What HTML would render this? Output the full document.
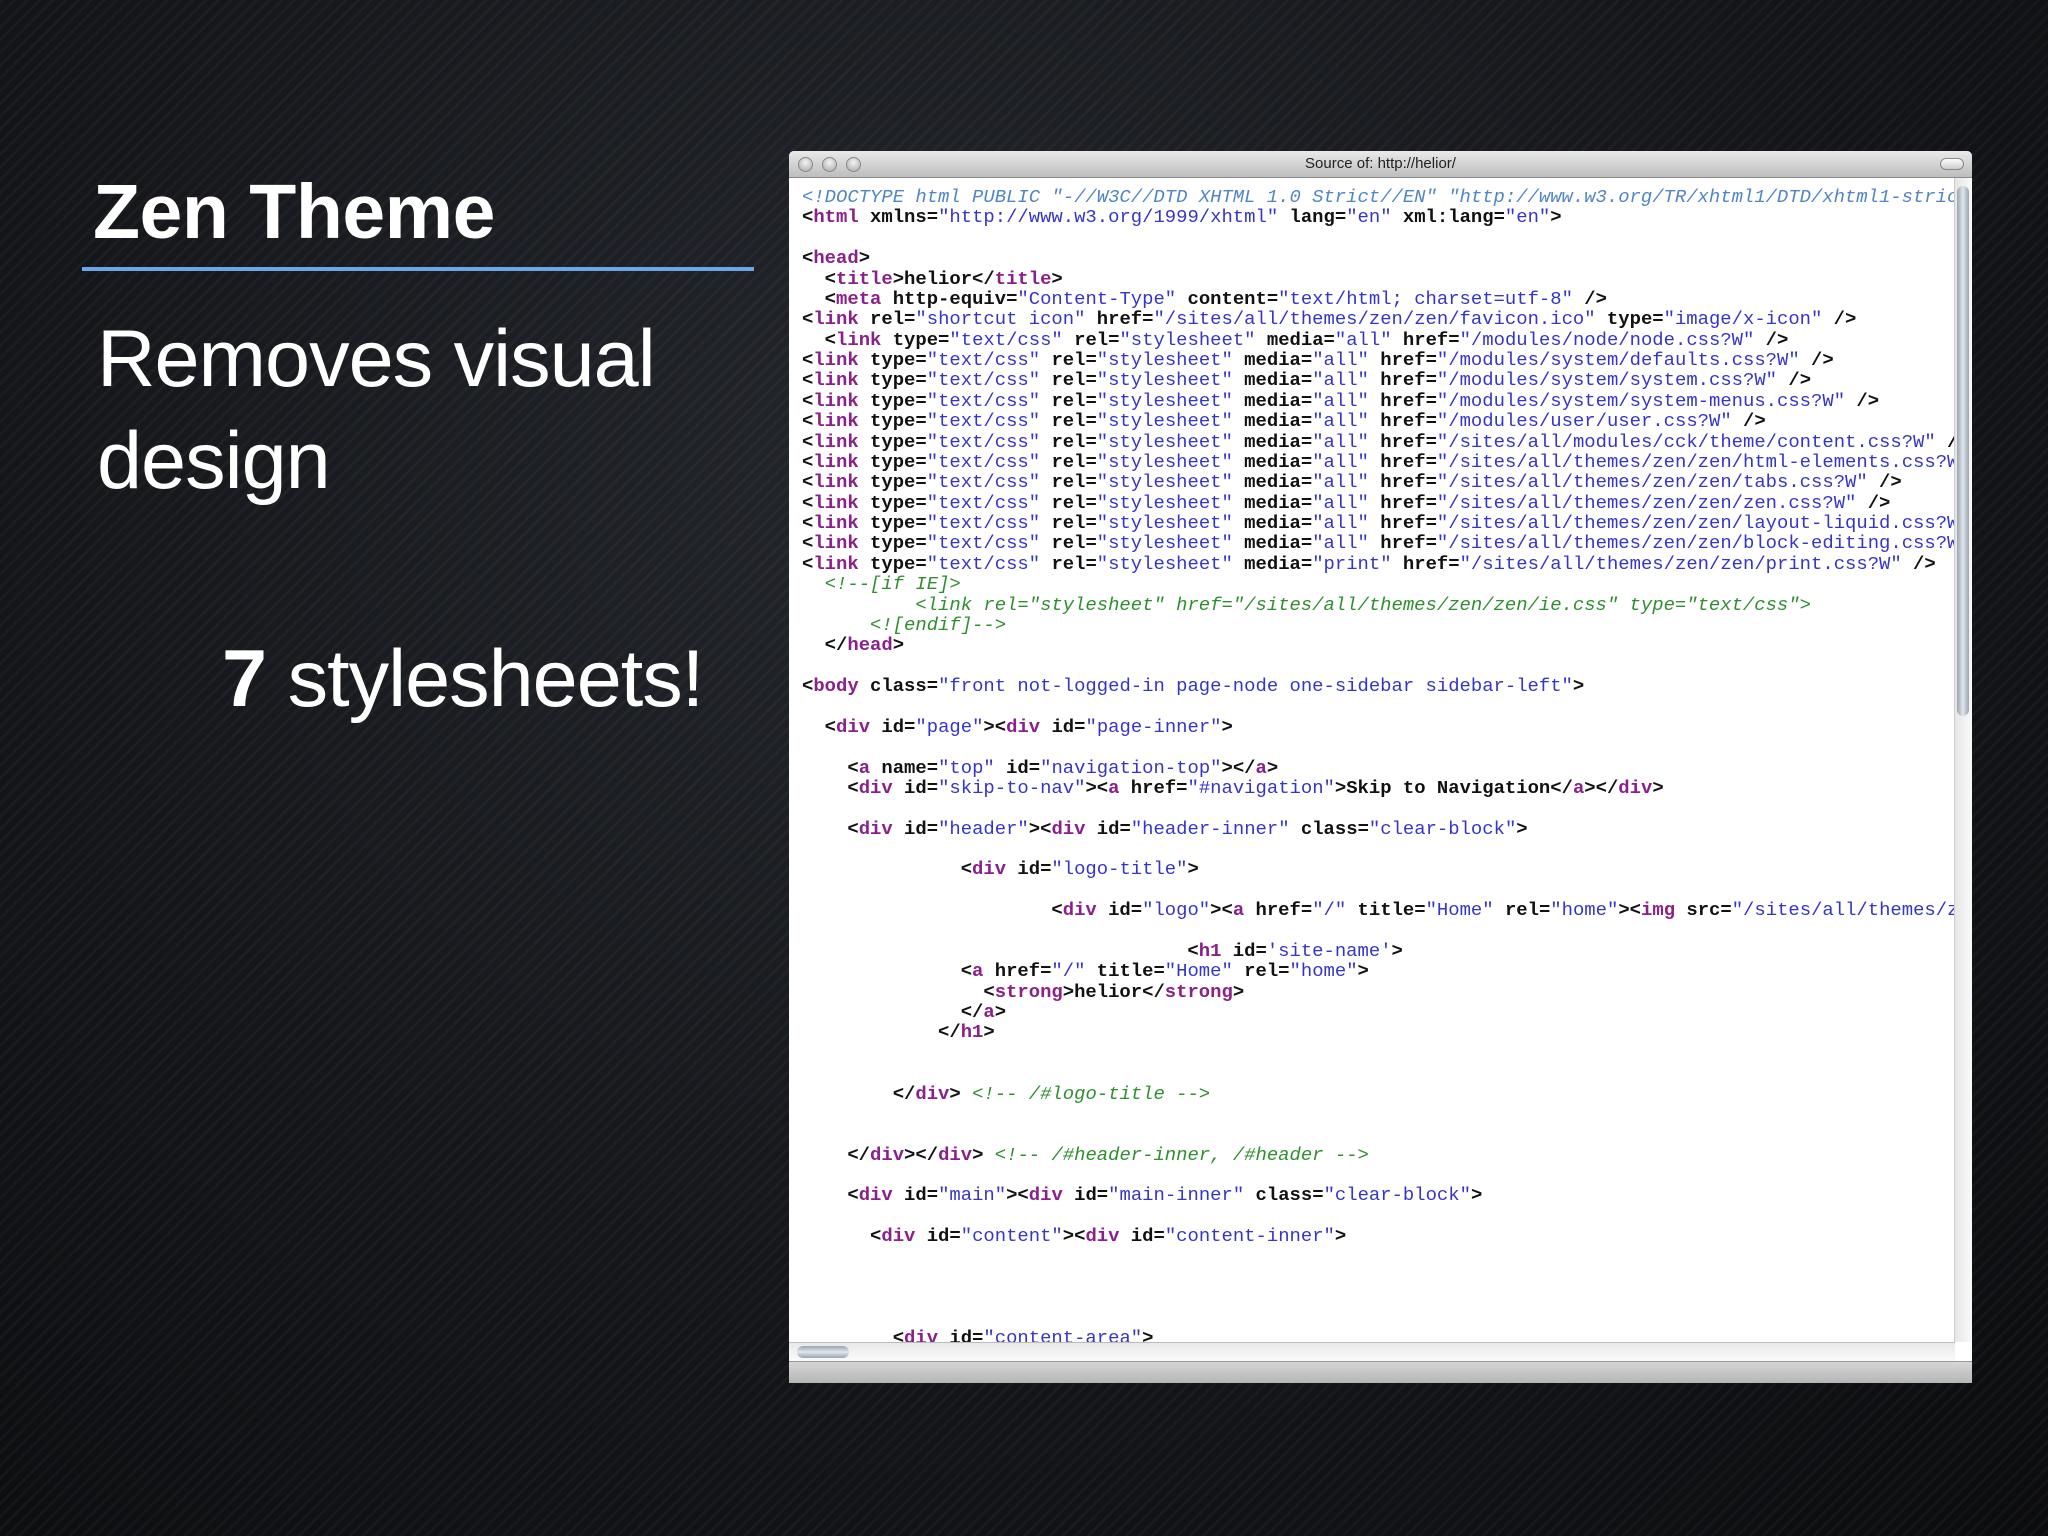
<!DOCTYPE html>
<html><head><meta charset="utf-8">
<style>
html,body{margin:0;padding:0}
body{width:2048px;height:1536px;overflow:hidden;position:relative;
background:
repeating-linear-gradient(135deg,rgba(255,255,255,0.03) 0 3px,rgba(0,0,0,0) 3px 9px),
radial-gradient(ellipse at 45% 30%,#23262b 0%,#14161a 55%,#0b0c0e 100%);
font-family:"Liberation Sans",sans-serif;color:#fff}
.h1{position:absolute;left:93px;top:167px;font-size:77px;font-weight:bold;line-height:90px;letter-spacing:-0.5px}
.rule{position:absolute;left:82px;top:267px;width:672px;height:4px;background:#6aa6e8}
.b1{position:absolute;left:97px;top:308px;font-size:81px;line-height:102px;letter-spacing:-1px}
.b2{position:absolute;left:222px;top:628px;font-size:81px;line-height:102px;letter-spacing:-1px}
.win{position:absolute;left:789px;top:151px;width:1183px;height:1232px;background:#fff;overflow:hidden;border-radius:5px 5px 0 0}
.tb{position:absolute;left:0;top:0;width:100%;height:26px;background:linear-gradient(#eaeaea,#bdbdbd);border-bottom:1px solid #8a8a8a;text-align:center;font-size:15px;line-height:26px;color:#222}
.dot{position:absolute;top:6px;width:13px;height:13px;border-radius:50%;background:radial-gradient(circle at 50% 35%,#f4f4f4,#a5a5a5);border:1px solid #888}
.pill{position:absolute;right:8px;top:7px;width:22px;height:10px;border-radius:6px;border:1px solid #888;background:linear-gradient(#fff,#ccc)}
pre{position:absolute;left:13px;top:36px;margin:0;font-family:"Liberation Mono",monospace;font-size:18.9px;line-height:20.37px;font-weight:bold;color:#111;white-space:pre}
.t{color:#8b1f8b}.v{color:#3535c8;font-weight:normal}.d{color:#4f86c6;font-style:italic;font-weight:normal}.c{color:#2f8f2f;font-style:italic;font-weight:normal}
.vs{position:absolute;right:0;top:27px;width:17px;height:1164px;background:linear-gradient(90deg,#e6e6e6,#fafafa);border-left:1px solid #ccc}
.vt{position:absolute;left:2px;top:8px;width:12px;height:530px;border-radius:7px;background:linear-gradient(90deg,#9aa5b0,#dfe6ec,#9aa5b0)}
.hs{position:absolute;left:0;top:1191px;width:1166px;height:18px;background:linear-gradient(#e8e8e8,#fafafa);border-top:1px solid #bbb}
.ht{position:absolute;left:8px;top:3px;width:52px;height:12px;border-radius:7px;background:linear-gradient(#9aa5b0,#dfe6ec,#9aa5b0)}
.bb{position:absolute;left:0;top:1210px;width:100%;height:22px;background:linear-gradient(#d6d6d6,#b4b4b4);border-top:1px solid #999}
</style></head><body>
<div class="h1">Zen Theme</div>
<div class="rule"></div>
<div class="b1">Removes visual<br>design</div>
<div class="b2"><b>7</b> stylesheets!</div>
<div class="win">
<div class="tb">Source of: http://helior/<span class="dot" style="left:9px"></span><span class="dot" style="left:33px"></span><span class="dot" style="left:57px"></span><span class="pill"></span></div>
<pre><span class="d">&lt;!DOCTYPE html PUBLIC "-//W3C//DTD XHTML 1.0 Strict//EN" "http://www.w3.org/TR/xhtml1/DTD/xhtml1-strict.dtd"&gt;</span>
&lt;<span class="t">html</span> xmlns=<span class="v">"http://www.w3.org/1999/xhtml"</span> lang=<span class="v">"en"</span> xml:lang=<span class="v">"en"</span>&gt;

&lt;<span class="t">head</span>&gt;
  &lt;<span class="t">title</span>&gt;helior&lt;/<span class="t">title</span>&gt;
  &lt;<span class="t">meta</span> http-equiv=<span class="v">"Content-Type"</span> content=<span class="v">"text/html; charset=utf-8"</span> /&gt;
&lt;<span class="t">link</span> rel=<span class="v">"shortcut icon"</span> href=<span class="v">"/sites/all/themes/zen/zen/favicon.ico"</span> type=<span class="v">"image/x-icon"</span> /&gt;
  &lt;<span class="t">link</span> type=<span class="v">"text/css"</span> rel=<span class="v">"stylesheet"</span> media=<span class="v">"all"</span> href=<span class="v">"/modules/node/node.css?W"</span> /&gt;
&lt;<span class="t">link</span> type=<span class="v">"text/css"</span> rel=<span class="v">"stylesheet"</span> media=<span class="v">"all"</span> href=<span class="v">"/modules/system/defaults.css?W"</span> /&gt;
&lt;<span class="t">link</span> type=<span class="v">"text/css"</span> rel=<span class="v">"stylesheet"</span> media=<span class="v">"all"</span> href=<span class="v">"/modules/system/system.css?W"</span> /&gt;
&lt;<span class="t">link</span> type=<span class="v">"text/css"</span> rel=<span class="v">"stylesheet"</span> media=<span class="v">"all"</span> href=<span class="v">"/modules/system/system-menus.css?W"</span> /&gt;
&lt;<span class="t">link</span> type=<span class="v">"text/css"</span> rel=<span class="v">"stylesheet"</span> media=<span class="v">"all"</span> href=<span class="v">"/modules/user/user.css?W"</span> /&gt;
&lt;<span class="t">link</span> type=<span class="v">"text/css"</span> rel=<span class="v">"stylesheet"</span> media=<span class="v">"all"</span> href=<span class="v">"/sites/all/modules/cck/theme/content.css?W"</span> /&gt;
&lt;<span class="t">link</span> type=<span class="v">"text/css"</span> rel=<span class="v">"stylesheet"</span> media=<span class="v">"all"</span> href=<span class="v">"/sites/all/themes/zen/zen/html-elements.css?W"</span> /&gt;
&lt;<span class="t">link</span> type=<span class="v">"text/css"</span> rel=<span class="v">"stylesheet"</span> media=<span class="v">"all"</span> href=<span class="v">"/sites/all/themes/zen/zen/tabs.css?W"</span> /&gt;
&lt;<span class="t">link</span> type=<span class="v">"text/css"</span> rel=<span class="v">"stylesheet"</span> media=<span class="v">"all"</span> href=<span class="v">"/sites/all/themes/zen/zen/zen.css?W"</span> /&gt;
&lt;<span class="t">link</span> type=<span class="v">"text/css"</span> rel=<span class="v">"stylesheet"</span> media=<span class="v">"all"</span> href=<span class="v">"/sites/all/themes/zen/zen/layout-liquid.css?W"</span> /&gt;
&lt;<span class="t">link</span> type=<span class="v">"text/css"</span> rel=<span class="v">"stylesheet"</span> media=<span class="v">"all"</span> href=<span class="v">"/sites/all/themes/zen/zen/block-editing.css?W"</span> /&gt;
&lt;<span class="t">link</span> type=<span class="v">"text/css"</span> rel=<span class="v">"stylesheet"</span> media=<span class="v">"print"</span> href=<span class="v">"/sites/all/themes/zen/zen/print.css?W"</span> /&gt;
  <span class="c">&lt;!--[if IE]&gt;</span>
          <span class="c">&lt;link rel="stylesheet" href="/sites/all/themes/zen/zen/ie.css" type="text/css"&gt;</span>
      <span class="c">&lt;![endif]--&gt;</span>
  &lt;/<span class="t">head</span>&gt;

&lt;<span class="t">body</span> class=<span class="v">"front not-logged-in page-node one-sidebar sidebar-left"</span>&gt;

  &lt;<span class="t">div</span> id=<span class="v">"page"</span>&gt;&lt;<span class="t">div</span> id=<span class="v">"page-inner"</span>&gt;

    &lt;<span class="t">a</span> name=<span class="v">"top"</span> id=<span class="v">"navigation-top"</span>&gt;&lt;/<span class="t">a</span>&gt;
    &lt;<span class="t">div</span> id=<span class="v">"skip-to-nav"</span>&gt;&lt;<span class="t">a</span> href=<span class="v">"#navigation"</span>&gt;Skip to Navigation&lt;/<span class="t">a</span>&gt;&lt;/<span class="t">div</span>&gt;

    &lt;<span class="t">div</span> id=<span class="v">"header"</span>&gt;&lt;<span class="t">div</span> id=<span class="v">"header-inner"</span> class=<span class="v">"clear-block"</span>&gt;

              &lt;<span class="t">div</span> id=<span class="v">"logo-title"</span>&gt;

                      &lt;<span class="t">div</span> id=<span class="v">"logo"</span>&gt;&lt;<span class="t">a</span> href=<span class="v">"/"</span> title=<span class="v">"Home"</span> rel=<span class="v">"home"</span>&gt;&lt;<span class="t">img</span> src=<span class="v">"/sites/all/themes/zen/zen/logo.png"</span>

                                  &lt;<span class="t">h1</span> id=<span class="v">'site-name'</span>&gt;
              &lt;<span class="t">a</span> href=<span class="v">"/"</span> title=<span class="v">"Home"</span> rel=<span class="v">"home"</span>&gt;
                &lt;<span class="t">strong</span>&gt;helior&lt;/<span class="t">strong</span>&gt;
              &lt;/<span class="t">a</span>&gt;
            &lt;/<span class="t">h1</span>&gt;


        &lt;/<span class="t">div</span>&gt; <span class="c">&lt;!-- /#logo-title --&gt;</span>


    &lt;/<span class="t">div</span>&gt;&lt;/<span class="t">div</span>&gt; <span class="c">&lt;!-- /#header-inner, /#header --&gt;</span>

    &lt;<span class="t">div</span> id=<span class="v">"main"</span>&gt;&lt;<span class="t">div</span> id=<span class="v">"main-inner"</span> class=<span class="v">"clear-block"</span>&gt;

      &lt;<span class="t">div</span> id=<span class="v">"content"</span>&gt;&lt;<span class="t">div</span> id=<span class="v">"content-inner"</span>&gt;




        &lt;<span class="t">div</span> id=<span class="v">"content-area"</span>&gt;</pre>
<div class="vs"><div class="vt"></div></div>
<div class="hs"><div class="ht"></div></div>
<div class="bb"></div>
</div>
</body></html>
